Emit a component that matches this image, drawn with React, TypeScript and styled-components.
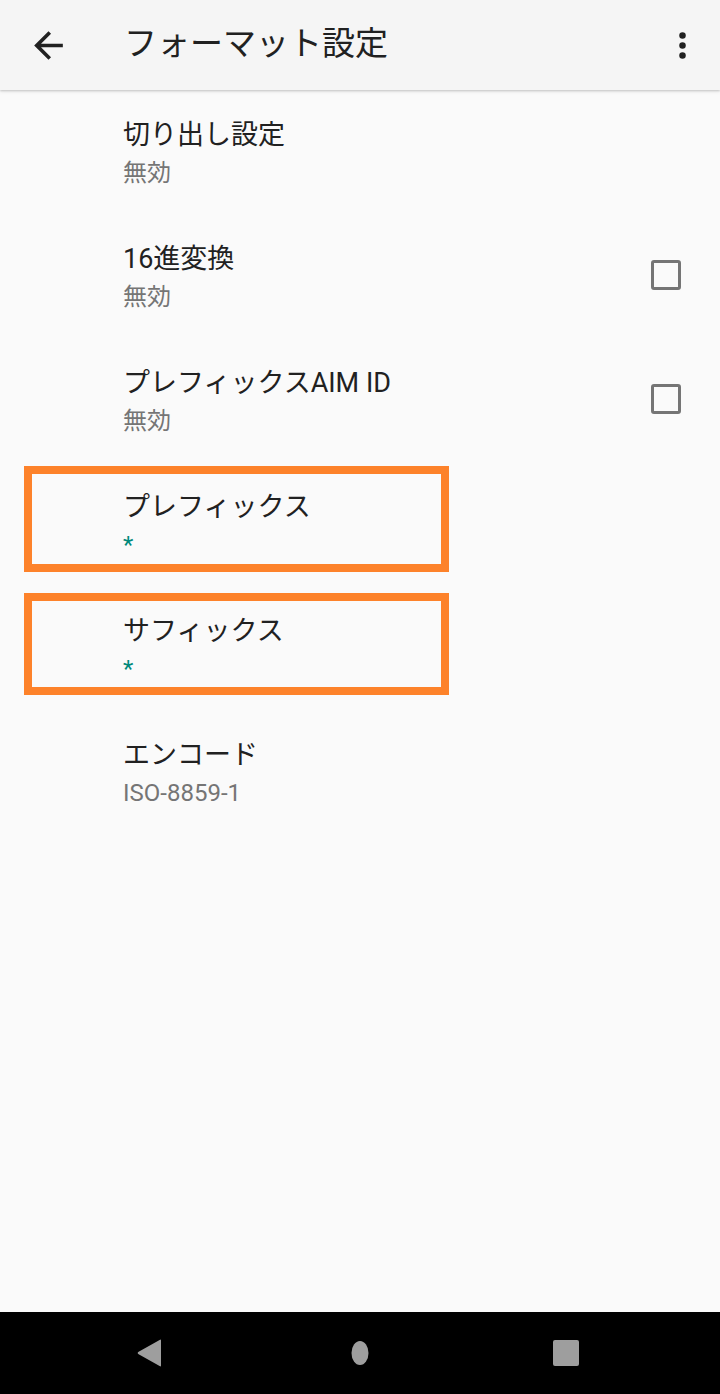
import React from 'react'
import styled, { createGlobalStyle } from 'styled-components'

const GlobalStyle = createGlobalStyle`
  html, body {
    margin: 0;
    padding: 0;
    background: #fafafa;
  }
  body {
    font-family: Roboto, 'Noto Sans CJK JP', sans-serif;
    -webkit-font-smoothing: antialiased;
  }
`

const Screen = styled.div`
  display: flex;
  flex-direction: column;
  width: 720px;
  height: 1394px;
  background: #fafafa;
  overflow: hidden;
`

const AppBar = styled.header`
  position: relative;
  z-index: 1;
  display: flex;
  align-items: center;
  height: 90px;
  flex-shrink: 0;
  background: #f5f5f5;
  box-shadow: 0 1px 2px rgba(0, 0, 0, 0.18), 0 2px 4px rgba(0, 0, 0, 0.06);
`

const IconButton = styled.button<{ $left?: number; $right?: number }>`
  display: flex;
  align-items: center;
  justify-content: center;
  border: 0;
  padding: 0;
  margin: 0 ${p => p.$right ?? 0}px 0 ${p => p.$left ?? 0}px;
  background: none;
  color: #212121;
  width: 44px;
  height: 44px;
`

const Title = styled.h1`
  flex: 1;
  margin: -2px 0 0 54px;
  font-size: 33px;
  font-weight: 400;
  color: #212121;
  line-height: 40px;
`

const List = styled.main`
  flex: 1;
  display: flex;
  flex-direction: column;
`

const Row = styled.div`
  position: relative;
  display: flex;
  align-items: flex-start;
  height: 124px;
  padding: 27px 39px 0 123px;
  box-sizing: border-box;
`

const RowText = styled.div`
  flex: 1;
  display: flex;
  flex-direction: column;
`

const RowTitle = styled.div`
  font-size: 27px;
  line-height: 36px;
  color: #212121;
`

const Summary = styled.div<{ $accent?: boolean }>`
  margin-top: 6px;
  font-size: 24px;
  line-height: 28px;
  color: ${p => (p.$accent ? '#00897b' : '#757575')};
`

const Checkbox = styled.span`
  display: block;
  margin-top: 19px;
  width: 24px;
  height: 24px;
  border: 3px solid #757575;
  border-radius: 3px;
`

const Highlight = styled.div<{ $top: number; $height: number }>`
  position: absolute;
  left: 24px;
  top: ${p => p.$top}px;
  width: 425px;
  height: ${p => p.$height}px;
  border: 8px solid #fd822a;
  box-sizing: border-box;
  pointer-events: none;
`

const NavBar = styled.nav`
  display: flex;
  align-items: center;
  height: 82px;
  flex-shrink: 0;
  background: #000;
`

const NavInner = styled.div`
  position: relative;
  width: 100%;
  height: 40px;
`

const NavSlot = styled.div<{ $center: number }>`
  position: absolute;
  left: ${p => p.$center - 20}px;
  width: 40px;
  height: 40px;
  display: flex;
  align-items: center;
  justify-content: center;
`

const BackIcon = () => (
  <svg width="43" height="43" viewBox="0 0 24 24" fill="currentColor">
    <path d="M20 11H7.83l5.59-5.59L12 4l-8 8 8 8 1.41-1.41L7.83 13H20v-2z" />
  </svg>
)

const MoreIcon = () => (
  <svg width="39" height="39" viewBox="0 0 24 24" fill="currentColor">
    <circle cx="12" cy="5.9" r="2" />
    <circle cx="12" cy="12" r="2" />
    <circle cx="12" cy="18.1" r="2" />
  </svg>
)

interface Pref {
  title: string
  summary: string
  accent?: boolean
  checkbox?: boolean
  highlight?: { top: number; height: number }
}

const prefs: Pref[] = [
  { title: '切り出し設定', summary: '無効' },
  { title: '16進変換', summary: '無効', checkbox: true },
  { title: 'プレフィックスAIM ID', summary: '無効', checkbox: true },
  { title: 'プレフィックス', summary: '*', accent: true, highlight: { top: 4, height: 106 } },
  { title: 'サフィックス', summary: '*', accent: true, highlight: { top: 7, height: 102 } },
  { title: 'エンコード', summary: 'ISO-8859-1' },
]

export default function App() {
  return (
    <Screen>
      <GlobalStyle />
      <AppBar>
        <IconButton $left={26} aria-label="back">
          <BackIcon />
        </IconButton>
        <Title>フォーマット設定</Title>
        <IconButton $right={16} aria-label="more">
          <MoreIcon />
        </IconButton>
      </AppBar>
      <List>
        {prefs.map(p => (
          <Row key={p.title}>
            <RowText>
              <RowTitle>{p.title}</RowTitle>
              <Summary $accent={p.accent}>{p.summary}</Summary>
            </RowText>
            {p.checkbox && <Checkbox />}
            {p.highlight && <Highlight $top={p.highlight.top} $height={p.highlight.height} />}
          </Row>
        ))}
      </List>
      <NavBar>
        <NavInner>
          <NavSlot $center={150}>
            <svg width="26" height="28" viewBox="0 0 26 28">
              <path d="M24 1.5 V26.5 Q24 28 22.6 27 L1.2 15 Q0 14 1.2 13 L22.6 1 Q24 0 24 1.5 Z" fill="#9e9e9e" />
            </svg>
          </NavSlot>
          <NavSlot $center={360}>
            <svg width="18" height="24" viewBox="0 0 18 24">
              <ellipse cx="9" cy="12" rx="8.5" ry="12" fill="#9e9e9e" />
            </svg>
          </NavSlot>
          <NavSlot $center={566}>
            <svg width="26" height="26" viewBox="0 0 26 26">
              <rect x="0" y="0" width="26" height="26" rx="2" fill="#9e9e9e" />
            </svg>
          </NavSlot>
        </NavInner>
      </NavBar>
    </Screen>
  )
}
